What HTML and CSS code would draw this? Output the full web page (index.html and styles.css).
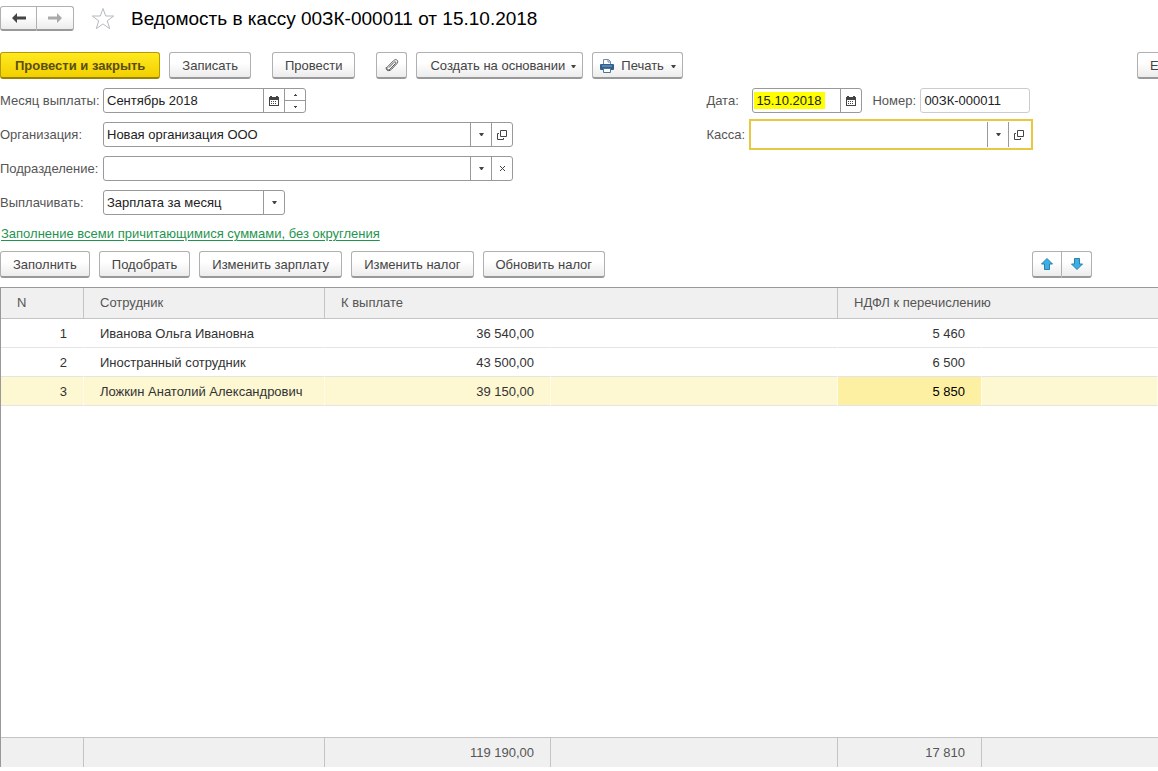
FILE: index.html
```html
<!DOCTYPE html>
<html lang="ru">
<head>
<meta charset="utf-8">
<title>Ведомость в кассу</title>
<link rel="stylesheet" href="styles.css">
</head>
<body>
<svg class="symbols" aria-hidden="true">
  <symbol id="caret" viewBox="0 0 5 3"><path d="M0 0h5L3 3H2z" fill="currentColor"/></symbol>
  <symbol id="calendar" viewBox="0 0 10 10"><path d="M0 1h1V0h2v1h4V0h2v1h1v9H0zM1 4v5h8V4z" fill="currentColor" fill-rule="evenodd"/><path d="M2 5h1v1H2zM4 5h1v1H4zM6 5h1v1H6zM2 7h1v1H2zM4 7h1v1H4zM6 7h1v1H6z" fill="currentColor"/></symbol>
  <symbol id="open" viewBox="0 0 10 10"><path d="M3.500.5h6v6h-6zM2 3.500H.5v6h6V8" fill="none" stroke="currentColor"/></symbol>
</svg>
<main class="page">
  <header class="header">
    <div class="group">
      <button class="btn nav" type="button" aria-label="Назад"><svg width="16" height="12" viewBox="0 0 16 12"><path d="M1 6l5-5v3.500h9v3H6V11z" fill="#444"/></svg></button>
      <button class="btn nav" type="button" aria-label="Вперед"><svg width="16" height="12" viewBox="0 0 16 12"><path d="M15 6l-5-5v3.500H1v3h9V11z" fill="#aaa"/></svg></button>
    </div>
    <button class="star" type="button" aria-label="В избранное"><svg width="24" height="23" viewBox="0 0 24 23"><path d="M12 1.500l2.700 7.500h8l-6.400 4.800 2.400 7.900-6.700-4.800-6.700 4.800 2.400-7.900L1.300 9h8z" fill="#fff" stroke="#b4b9c0"/></svg></button>
    <h1 class="title">Ведомость в кассу 00ЗК-000011 от 15.10.2018</h1>
  </header>

  <div class="toolbar">
    <button class="btn primary" type="button">Провести и закрыть</button>
    <button class="btn" type="button">Записать</button>
    <button class="btn apart" type="button">Провести</button>
    <button class="btn icon apart" type="button" aria-label="Файлы"><svg width="16" height="16" viewBox="0 0 16 16"><path d="M5 10.500l5-5.200c1.300-1.300 2.600 0 1.500 1.200l-5.500 5.700c-2 2-4.300-.4-2.500-2.300l6-6.200c2.700-2.700 5.800.3 3.300 3l-5.300 5.600c-3 3-6.500.5-5-2.300" fill="none" stroke="#555"/></svg></button>
    <button class="btn drop" type="button">Создать на основании<svg class="caret"><use href="#caret"/></svg></button>
    <button class="btn drop print" type="button"><svg width="14" height="14" viewBox="0 0 14 14"><path d="M3.500 6V.5h5l2 2V6" fill="#fff" stroke="#6f8ba8"/><path d="M8 .5V3h2.500" fill="none" stroke="#6f8ba8"/><rect y="5" width="14" height="6" rx="1" fill="#2f5f8f"/><path d="M2 7h10" stroke="#86a9c8"/><path d="M3.500 9.500h7v4h-7z" fill="#fff" stroke="#4d7396"/></svg>Печать<svg class="caret"><use href="#caret"/></svg></button>
    <button class="btn more" type="button">Еще</button>
  </div>

  <form class="form">
    <div class="column">
      <div class="row">
        <label class="label" for="month">Месяц выплаты:</label>
        <div class="field month">
          <input id="month" type="text" value="Сентябрь 2018">
          <button class="cell" type="button" aria-label="Выбрать месяц"><svg class="ico"><use href="#calendar"/></svg></button>
          <div class="spin">
            <button type="button" aria-label="Больше"><svg width="3" height="2"><path d="M1 0h1v1h1v1H0V1h1z" fill="#444"/></svg></button>
            <button type="button" aria-label="Меньше"><svg width="3" height="2"><path d="M0 0h3v1H2v1H1V1H0z" fill="#444"/></svg></button>
          </div>
        </div>
      </div>
      <div class="row">
        <label class="label" for="org">Организация:</label>
        <div class="field wide">
          <input id="org" type="text" value="Новая организация ООО">
          <button class="cell" type="button" aria-label="Список"><svg class="caret"><use href="#caret"/></svg></button>
          <button class="cell" type="button" aria-label="Открыть"><svg class="ico"><use href="#open"/></svg></button>
        </div>
      </div>
      <div class="row">
        <label class="label" for="dept">Подразделение:</label>
        <div class="field wide">
          <input id="dept" type="text">
          <button class="cell" type="button" aria-label="Список"><svg class="caret"><use href="#caret"/></svg></button>
          <button class="cell" type="button" aria-label="Очистить"><svg width="5" height="5" viewBox="0 0 5 5"><path d="M0 0l5 5M5 0L0 5" stroke="#444"/></svg></button>
        </div>
      </div>
      <div class="row">
        <label class="label" for="pay">Выплачивать:</label>
        <div class="field choice">
          <select id="pay"><option>Зарплата за месяц</option></select>
          <span class="cell"><svg class="caret"><use href="#caret"/></svg></span>
        </div>
      </div>
    </div>
    <div class="column">
      <div class="row">
        <label class="label short" for="date">Дата:</label>
        <div class="field small">
          <span class="marked"><input id="date" type="text" value="15.10.2018"></span>
          <button class="cell" type="button" aria-label="Выбрать дату"><svg class="ico"><use href="#calendar"/></svg></button>
        </div>
        <label class="label number" for="num">Номер:</label>
        <div class="field small pale"><input id="num" type="text" value="00ЗК-000011"></div>
      </div>
      <div class="row">
        <label class="label short" for="cash">Касса:</label>
        <div class="field cash">
          <input id="cash" type="text">
          <button class="cell" type="button" aria-label="Список"><svg class="caret"><use href="#caret"/></svg></button>
          <button class="cell" type="button" aria-label="Открыть"><svg class="ico"><use href="#open"/></svg></button>
        </div>
      </div>
    </div>
  </form>

  <a class="link" href="#fill">Заполнение всеми причитающимися суммами, без округления</a>

  <div class="toolbar lower">
    <button class="btn" type="button">Заполнить</button>
    <button class="btn" type="button">Подобрать</button>
    <button class="btn" type="button">Изменить зарплату</button>
    <button class="btn" type="button">Изменить налог</button>
    <button class="btn" type="button">Обновить налог</button>
    <div class="group order">
      <button class="btn" type="button" aria-label="Вверх"><svg width="12" height="12" viewBox="0 0 12 12"><path d="M6 .5L11.500 6H8.500v5.500h-5V6H.5z" fill="#38b0e8" stroke="#2d7fa8"/></svg></button>
      <button class="btn" type="button" aria-label="Вниз"><svg width="12" height="12" viewBox="0 0 12 12"><path d="M6 11.500L.5 6h3V.5h5V6h3z" fill="#38b0e8" stroke="#2d7fa8"/></svg></button>
    </div>
  </div>

  <div class="grid">
    <table class="table">
      <colgroup><col class="c-num"><col class="c-name"><col class="c-pay"><col class="c-gap"><col class="c-tax"><col></colgroup>
      <thead>
        <tr><th>N</th><th>Сотрудник</th><th colspan="2">К выплате</th><th colspan="2">НДФЛ к перечислению</th></tr>
      </thead>
      <tbody>
        <tr><td class="r">1</td><td>Иванова Ольга Ивановна</td><td class="r">36 540,00</td><td></td><td class="r">5 460</td><td></td></tr>
        <tr><td class="r">2</td><td>Иностранный сотрудник</td><td class="r">43 500,00</td><td></td><td class="r">6 500</td><td></td></tr>
        <tr class="selected"><td class="r">3</td><td>Ложкин Анатолий Александрович</td><td class="r">39 150,00</td><td></td><td class="r current">5 850</td><td></td></tr>
        <tr class="filler"><td colspan="6"></td></tr>
      </tbody>
      <tfoot>
        <tr><td></td><td></td><td class="r">119 190,00</td><td></td><td class="r">17 810</td><td></td></tr>
      </tfoot>
    </table>
  </div>
</main>
</body>
</html>
```

FILE: styles.css
```css
* { box-sizing: border-box; }

body {
  margin: 0;
  background: #fff;
  color: #444;
  font: 13px/16px "Liberation Sans", Arial, sans-serif;
}

button, input, select { font: inherit; color: inherit; margin: 0; }
svg { display: block; flex: none; }
.symbols { position: absolute; width: 0; height: 0; }

.page {
  display: flex;
  flex-direction: column;
  min-height: 100vh;
  padding: 6px 0 4px;
  overflow: hidden;
}

.header { display: flex; align-items: center; height: 25px; }
.star { margin: 0 16px 0 17px; padding: 0; border: 0; background: none; }
.title { margin: 0; color: #000; font-size: 19px; line-height: 25px; font-weight: normal; white-space: nowrap; }

.btn {
  display: flex;
  align-items: center;
  justify-content: center;
  height: 27px;
  padding: 2px 12px 0;
  border: 1px solid #b0b0b0;
  border-bottom: 2px solid #999;
  border-radius: 3px;
  background: linear-gradient(#fff 40%, #ececec);
  white-space: nowrap;
}
.group { display: flex; }
.group .btn { padding: 0; width: 30px; }
.group .btn:first-child { border-radius: 3px 0 0 3px; }
.group .btn:last-child { border-left: 0; border-radius: 0 3px 3px 0; }
.group .nav { width: 37px; height: 25px; }

.toolbar { display: flex; gap: 9px; margin-top: 21px; }
.toolbar .apart { margin-left: 12px; }
.toolbar .primary {
  padding: 2px 14px 0;
  border-color: #b39a00;
  border-bottom-color: #998300;
  background: linear-gradient(#ffe920, #f2d000);
  color: #5a4d10;
  font-weight: bold;
}
.toolbar .icon { width: 31px; padding: 0; }
.toolbar .drop { gap: 6px; padding-left: 13px; padding-right: 6px; }
.toolbar .print { gap: 7px; padding-left: 7px; }
.toolbar .more { width: 80px; justify-content: flex-start; margin: 0 -59px 0 auto; }
.caret { width: 5px; height: 3px; }
.ico { width: 10px; height: 10px; }

.form {
  display: grid;
  grid-template-columns: minmax(0, 61fr) minmax(0, 39fr);
  margin-top: 9px;
}
.column { display: flex; flex-direction: column; gap: 9px; }
.row { display: flex; align-items: center; height: 25px; }
.label { width: 103px; flex: none; color: #555; white-space: nowrap; }
.label.short { width: 46px; }
.label.number { width: 48px; margin-left: 10px; }

.field {
  display: flex;
  height: 25px;
  border: 1px solid #999;
  border-radius: 3px;
  background: #fff;
  color: #222;
}
.field input, .field select {
  flex: 1;
  width: 100%;
  min-width: 0;
  padding: 0 3px;
  border: 0;
  outline: 0;
  background: none;
}
.cell {
  display: flex;
  align-items: center;
  justify-content: center;
  width: 21px;
  flex: none;
  padding: 0;
  border: 0;
  border-left: 1px solid #999;
  background: none;
  color: #444;
}
.field.month { width: 203px; }
.field.wide { width: 410px; }
.field.small { width: 110px; }
.field.pale { border-color: #ccc; }
.field.cash {
  width: 284px;
  height: 31px;
  margin: -3px;
  padding: 1px 2px 1px 1px;
  border: 2px solid #e8c840;
  border-radius: 0;
}
.choice { width: 182px; display: grid; grid-template-columns: 1fr 21px; }
.choice select { grid-area: 1 / 1 / 2 / 3; appearance: none; }
.choice .cell { grid-area: 1 / 2; pointer-events: none; }

.spin { display: flex; flex-direction: column; width: 21px; border-left: 1px solid #999; }
.spin button {
  display: flex;
  flex: 1;
  align-items: center;
  justify-content: center;
  padding: 0;
  border: 0;
  background: none;
}
.spin button + button { border-top: 1px solid #999; }
.marked { display: flex; flex: 1; min-width: 0; padding: 3px 15px 3px 1px; }
.marked input { padding: 0 0 0 2px; background: #ff0; }

.link {
  align-self: flex-start;
  margin: 11px 0 0 1px;
  color: #1f9450;
  text-underline-offset: 2px;
}

.toolbar.lower { margin-top: 9px; }
.order { margin: 0 66px 0 auto; }

.grid { display: grid; flex: 1; margin-top: 9px; }
.table {
  width: 100%;
  height: 100%;
  table-layout: fixed;
  border-collapse: separate;
  border-spacing: 0;
  border-top: 1px solid #999;
  border-left: 1px solid #999;
}
.c-num { width: 83px; }
.c-name { width: 241px; }
.c-pay { width: 226px; }
.c-gap { width: 287px; }
.c-tax { width: 144px; }
.table th, .table td { padding: 0 16px; text-align: left; font-weight: normal; white-space: nowrap; }
.table .r { text-align: right; }
.table th, tfoot td { background: #f0f0f0; color: #555; border-right: 1px solid #c4c4c4; }
.table th:last-child, tfoot td:last-child { border-right: 0; }
.table th { height: 31px; border-bottom: 1px solid #c4c4c4; }
.table tbody td {
  height: 29px;
  padding-top: 2px;
  border-right: 1px solid transparent;
  border-bottom: 1px solid #e4e4e4;
  color: #333;
}
.table .selected td { background: #fdf7d2; border-right-color: #fffbea; }
.table .selected .current { background: #fdf0a2; color: #000; }
.table .filler td { height: auto; padding: 0; border: 0; }
tfoot td { height: 30px; border-top: 1px solid #c4c4c4; }
```
